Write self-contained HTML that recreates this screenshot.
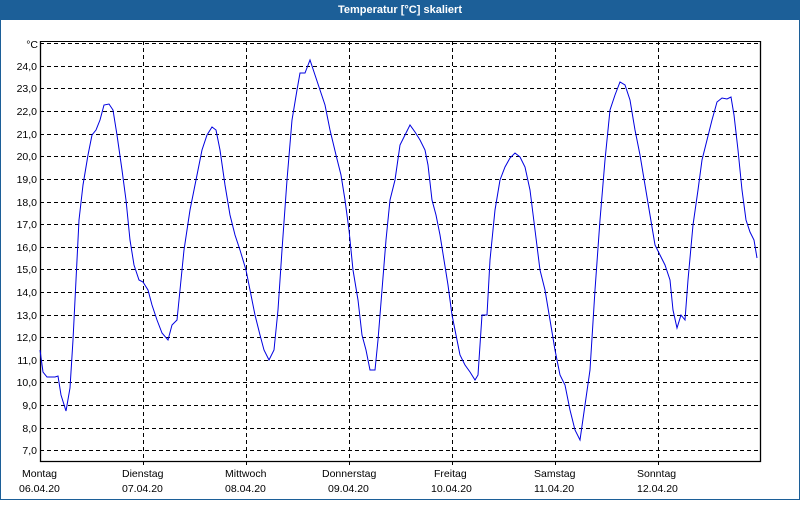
<!DOCTYPE html><html><head><style>
body{margin:0;width:800px;height:500px;overflow:hidden;background:#fff;font-family:"Liberation Sans","DejaVu Sans",sans-serif}
</style></head><body>
<svg width="800" height="500" xmlns="http://www.w3.org/2000/svg" font-family="Liberation Sans, sans-serif" font-size="11">
<rect x="0" y="0" width="800" height="500" fill="#1c5f98"/>
<rect x="1" y="20" width="798" height="479" fill="#fff"/>
<text x="400" y="13" fill="#fff" font-weight="bold" text-anchor="middle">Temperatur [°C] skaliert</text>
<g stroke="#000" stroke-dasharray="4,3" stroke-width="1">
<line x1="40" y1="43.5" x2="760" y2="43.5"/>
<line x1="40" y1="66.5" x2="760" y2="66.5"/><line x1="40" y1="88.5" x2="760" y2="88.5"/><line x1="40" y1="111.5" x2="760" y2="111.5"/><line x1="40" y1="134.5" x2="760" y2="134.5"/><line x1="40" y1="156.5" x2="760" y2="156.5"/><line x1="40" y1="179.5" x2="760" y2="179.5"/><line x1="40" y1="202.5" x2="760" y2="202.5"/><line x1="40" y1="224.5" x2="760" y2="224.5"/><line x1="40" y1="247.5" x2="760" y2="247.5"/><line x1="40" y1="269.5" x2="760" y2="269.5"/><line x1="40" y1="292.5" x2="760" y2="292.5"/><line x1="40" y1="315.5" x2="760" y2="315.5"/><line x1="40" y1="337.5" x2="760" y2="337.5"/><line x1="40" y1="360.5" x2="760" y2="360.5"/><line x1="40" y1="382.5" x2="760" y2="382.5"/><line x1="40" y1="405.5" x2="760" y2="405.5"/><line x1="40" y1="428.5" x2="760" y2="428.5"/><line x1="40" y1="450.5" x2="760" y2="450.5"/>
<line x1="143.5" y1="41" x2="143.5" y2="466"/><line x1="246.5" y1="41" x2="246.5" y2="466"/><line x1="349.5" y1="41" x2="349.5" y2="466"/><line x1="452.5" y1="41" x2="452.5" y2="466"/><line x1="555.5" y1="41" x2="555.5" y2="466"/><line x1="658.5" y1="41" x2="658.5" y2="466"/>
</g>
<polyline fill="none" stroke="#000" stroke-width="1.3" points="40.5,41 40.5,461.5 760.5,461.5 760.5,41"/>
<line x1="40" y1="41.5" x2="760" y2="41.5" stroke="#000" stroke-width="1"/>
<g fill="#000" text-anchor="end" font-size="10.5">
<text x="38" y="48">°C</text>
<text x="37" y="70">24,0</text><text x="37" y="92">23,0</text><text x="37" y="115">22,0</text><text x="37" y="138">21,0</text><text x="37" y="160">20,0</text><text x="37" y="183">19,0</text><text x="37" y="206">18,0</text><text x="37" y="228">17,0</text><text x="37" y="251">16,0</text><text x="37" y="273">15,0</text><text x="37" y="296">14,0</text><text x="37" y="319">13,0</text><text x="37" y="341">12,0</text><text x="37" y="364">11,0</text><text x="37" y="386">10,0</text><text x="37" y="409">9,0</text><text x="37" y="432">8,0</text><text x="37" y="454">7,0</text>
</g>
<g fill="#000" font-size="10.5">
<text x="22" y="477">Montag</text><text x="19" y="492">06.04.20</text>
<text x="122" y="477">Dienstag</text><text x="122" y="492">07.04.20</text>
<text x="225" y="477">Mittwoch</text><text x="225" y="492">08.04.20</text>
<text x="322" y="477">Donnerstag</text><text x="328" y="492">09.04.20</text>
<text x="434" y="477">Freitag</text><text x="431" y="492">10.04.20</text>
<text x="534" y="477">Samstag</text><text x="534" y="492">11.04.20</text>
<text x="637" y="477">Sonntag</text><text x="637" y="492">12.04.20</text>
</g>
<polyline fill="none" stroke="#0000e0" stroke-width="1" points="40,350 43,372 47,377 55,377 58,376 61,395 66,411 70,388 73,340 76,280 79,220 83,185 88,155 92,135 96,130 100,120 104,105 109,104 113,110 117,135 122,170 126,200 130,240 134,265 139,280 143,282 148,290 152,305 157,320 162,333 168,340 172,325 177,320 180,290 184,250 190,210 196,180 202,150 207,135 212,127 216,130 220,150 225,185 230,215 235,235 240,250 246,270 250,290 255,315 260,335 264,350 269,360 274,350 278,310 282,250 287,180 292,120 297,90 300,73 305,73 310,60 315,75 320,90 325,105 330,130 336,155 341,175 345,200 349,230 353,270 358,300 362,335 366,350 370,370 375,370 378,340 382,290 386,240 390,200 395,180 400,145 405,135 410,125 415,132 420,140 425,150 428,165 432,200 436,215 440,235 444,260 448,285 452,315 456,335 460,355 465,365 470,372 475,380 478,375 482,315 487,315 490,260 495,210 500,180 505,167 510,158 515,153 520,157 525,167 530,190 535,230 540,270 545,290 550,320 555,350 560,375 565,385 570,410 575,430 580,440 585,405 590,370 595,290 600,220 605,160 610,110 615,95 620,82 625,85 630,100 635,130 640,155 645,185 650,215 655,245 660,255 665,265 670,280 673,310 677,328 681,315 685,320 688,280 693,225 698,190 702,160 707,140 712,120 717,102 722,98 727,99 731,97 734,115 738,150 742,190 746,220 750,232 754,240 757,258"/>
</svg>
</body></html>
